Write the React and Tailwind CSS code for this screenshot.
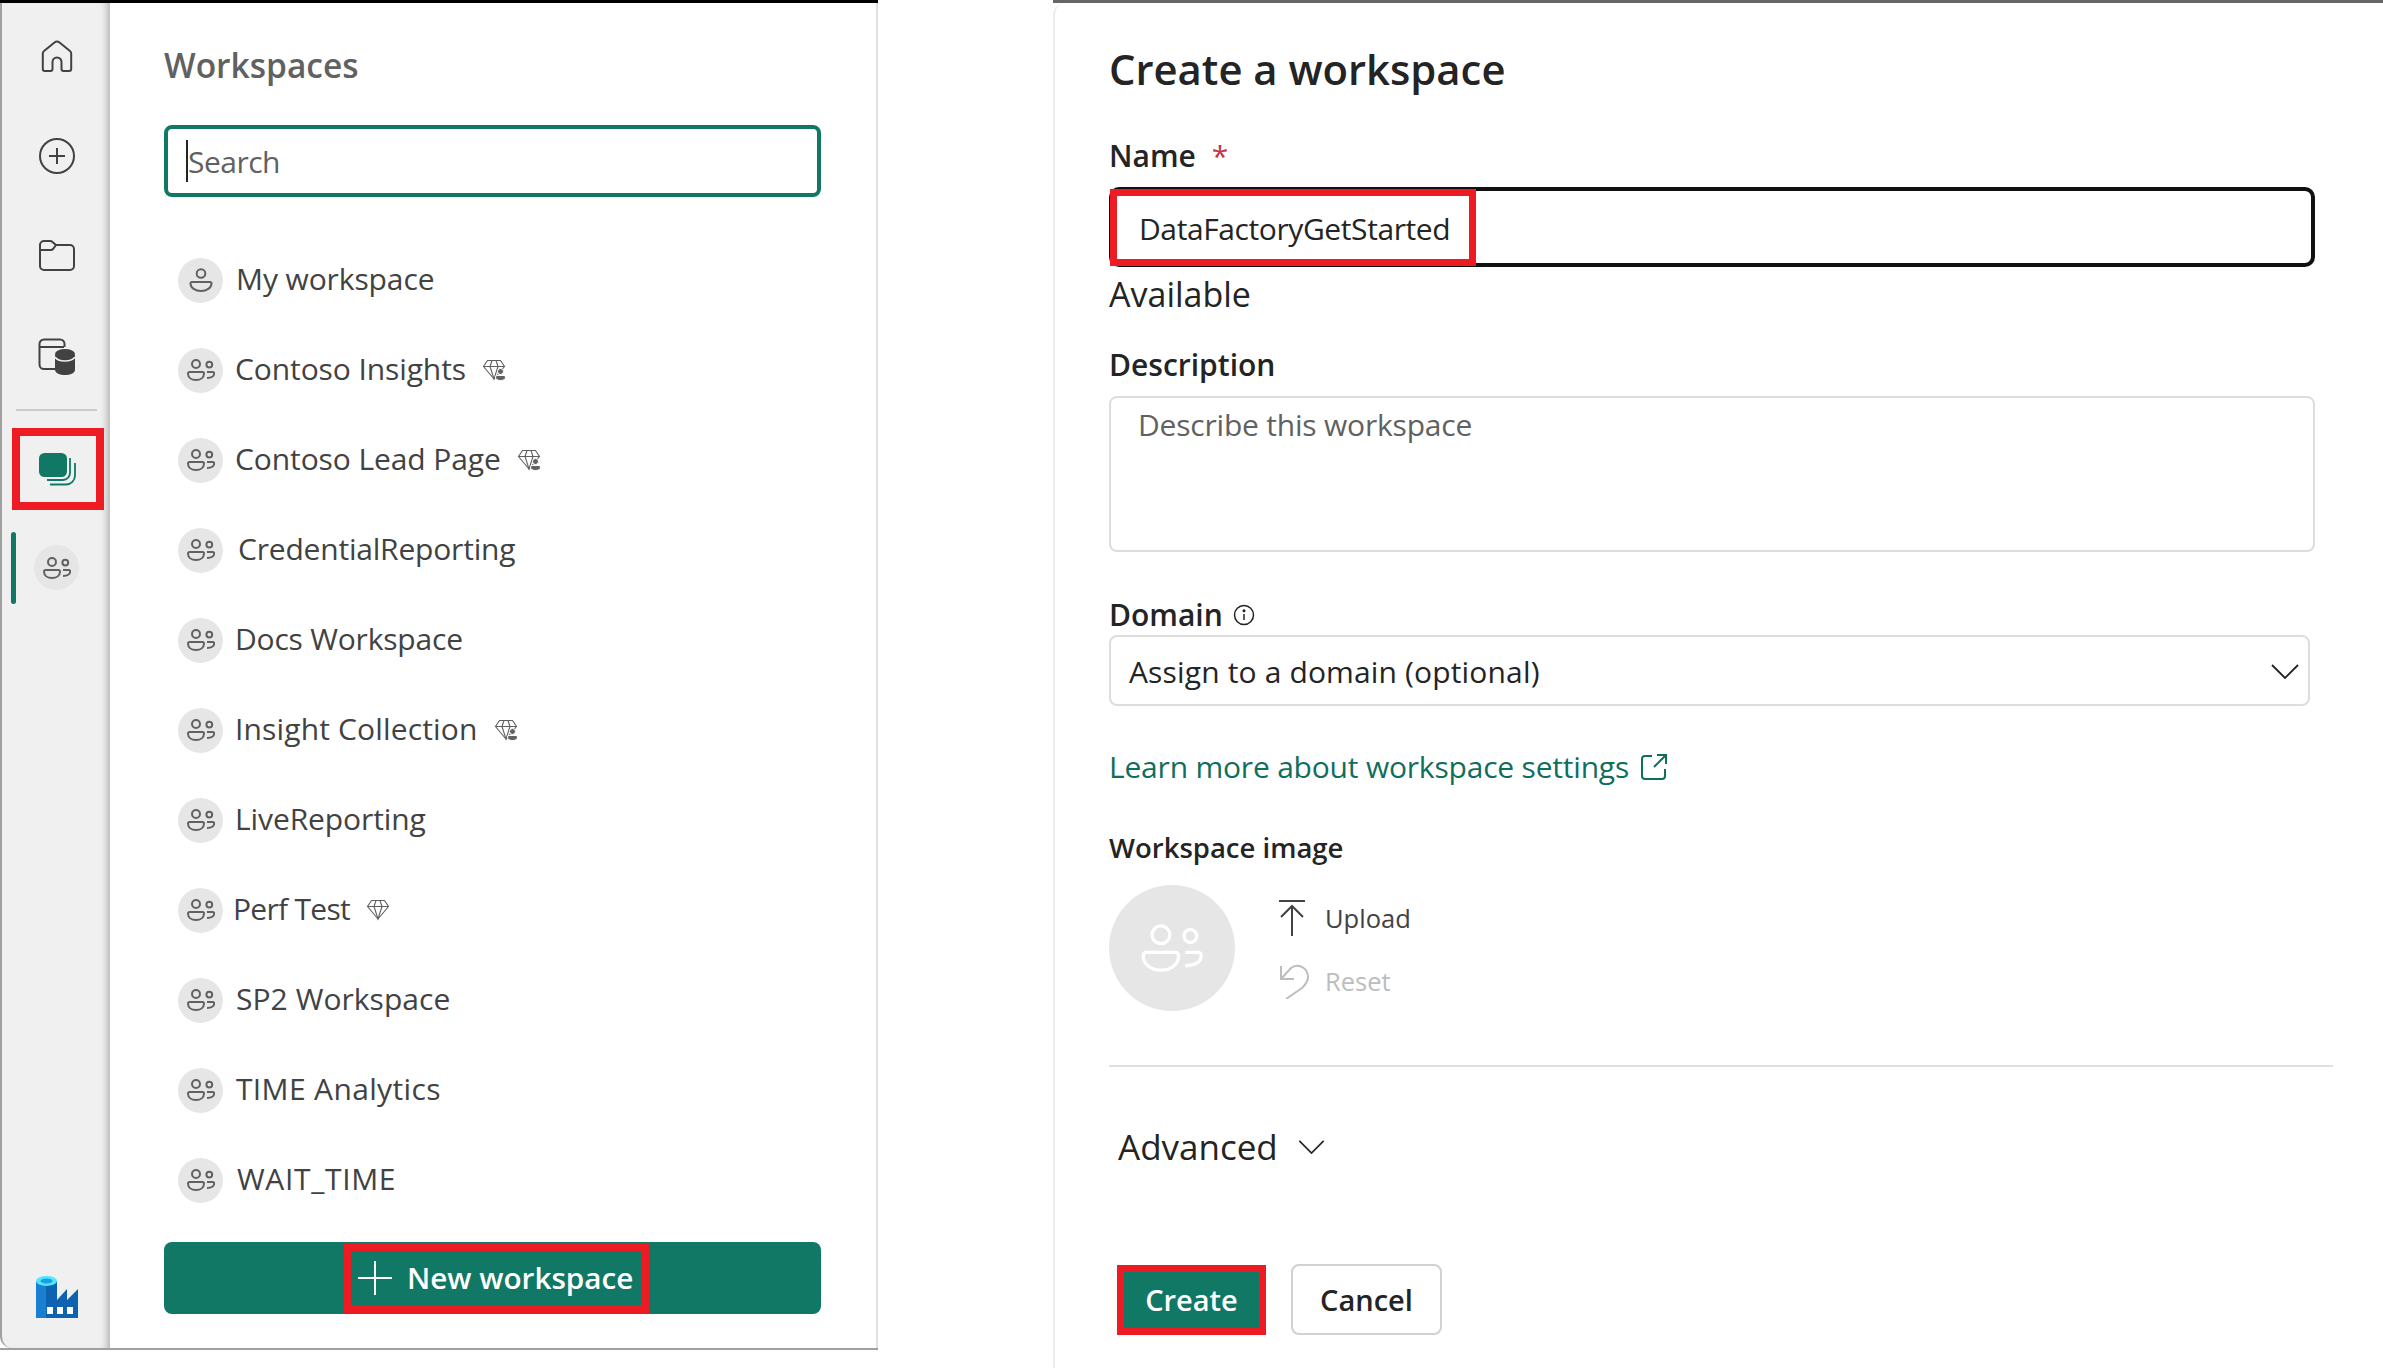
import React from 'react';

const font = { fontFamily: '"Open Sans", "Noto Sans", sans-serif' };

function PeopleIcon({ className = 'w-[28px] h-[22px] text-[#616161]', strokeWidth = 2 }) {
  return (
    <svg viewBox="0 0 28 22" className={className} fill="none" stroke="currentColor" strokeWidth={strokeWidth}>
      <circle cx="9" cy="5" r="4" />
      <circle cx="22.3" cy="5.6" r="2.9" />
      <path d="M2.5 13H15.5a1.5 1.5 0 0 1 1.5 1.5C17 18.5 13.5 21 9 21S1 18.5 1 14.5A1.5 1.5 0 0 1 2.5 13Z" />
      <path d="M20 13H25.8a1.4 1.4 0 0 1 1.4 1.4C27.2 17.2 24.5 19 20 19" />
    </svg>
  );
}

function PersonIcon() {
  return (
    <svg viewBox="0 0 24 24" className="w-[24px] h-[26px] text-[#616161]" fill="none" stroke="currentColor" strokeWidth="2">
      <circle cx="12" cy="5.5" r="4.3" />
      <path d="M3 14H21a1.5 1.5 0 0 1 1.5 1.5C22.5 20 17.5 23 12 23S1.500 20 1.500 15.500A1.500 1.500 0 0 1 3 14Z" />
    </svg>
  );
}

function DiamondIcon({ person }) {
  return (
    <svg viewBox="0 0 24 22" className="w-[24px] h-[22px] text-[#616161]" fill="none" stroke="currentColor" strokeWidth="1.100">
      <path d="M5.500 1.500H18.500L22.500 7.500L12 20L1.500 7.500Z" />
      <path d="M1.500 7.500H22.500M8 7.500L12 20L16 7.500M8 7.500L10 1.500M16 7.500L14 1.500" />
      {person && (
        <g stroke="#fff" strokeWidth="1" fill="currentColor">
          <circle cx="18.500" cy="12.500" r="3" />
          <path d="M13.500 18a1.500 1.500 0 0 1 1.500-1.500H22a1.500 1.500 0 0 1 1.500 1.500c0 2.500-2 3.500-5 3.500s-5-1-5-3.500Z" />
        </g>
      )}
    </svg>
  );
}

function HomeIcon() {
  return (
    <svg viewBox="0 0 32 33" className="w-[32px] h-[33px] text-[#424242]" fill="none" stroke="currentColor" strokeWidth="2">
      <path d="M13.500 2.500a4 4 0 0 1 5 0L29 11a3 3 0 0 1 1.200 2.400V29a2 2 0 0 1-2 2H22.500a2 2 0 0 1-2-2V22a4.500 4.500 0 0 0-9 0v7a2 2 0 0 1-2 2H3.800a2 2 0 0 1-2-2V13.400A3 3 0 0 1 3 11Z" />
    </svg>
  );
}

function PlusCircleIcon() {
  return (
    <svg viewBox="0 0 36 36" className="w-[36px] h-[36px] text-[#424242]" fill="none" stroke="currentColor" strokeWidth="2">
      <circle cx="18" cy="18" r="17" />
      <path d="M18 10V26M10 18H26" />
    </svg>
  );
}

function FolderIcon() {
  return (
    <svg viewBox="0 0 36 31" className="w-[36px] h-[31px] text-[#424242]" fill="none" stroke="currentColor" strokeWidth="2">
      <path d="M1 5a4 4 0 0 1 4-4H11a3.500 3.500 0 0 1 2.500 1L17 5H31a4 4 0 0 1 4 4V26a4 4 0 0 1-4 4H5a4 4 0 0 1-4-4Z" />
      <path d="M1 10H12a3 3 0 0 0 2-1L17 5" />
    </svg>
  );
}

function DataHubIcon() {
  return (
    <svg viewBox="0 0 37 37" className="w-[37px] h-[37px]" fill="none">
      <path d="M17 31H6a4.500 4.500 0 0 1-4.500-4.500V6A4.500 4.500 0 0 1 6 1.500H22A4.500 4.500 0 0 1 26.500 6V9M1.500 9H26" stroke="#424242" strokeWidth="2" />
      <path d="M17 17V32c0 3 5 5 10 5s10-2 10-5V17Z" fill="#424242" />
      <ellipse cx="27" cy="16" rx="10" ry="5" fill="#424242" />
      <path d="M17 19c1.500 2.500 5.500 4 10 4s8.500-1.500 10-4" stroke="#f0f0f0" strokeWidth="1.500" />
    </svg>
  );
}

function WorkspacesIcon() {
  return (
    <svg viewBox="0 0 38 33" className="w-[38px] h-[33px]" fill="none" stroke="#117865" strokeWidth="1.800">
      <rect x="0" y="0" width="28" height="24" rx="5.500" fill="#117865" stroke="none" />
      <path d="M8 27H24a7 7 0 0 0 7-7V5" />
      <path d="M11 31.500H27a9 9 0 0 0 9-9V10" />
    </svg>
  );
}

function FactoryLogo() {
  return (
    <svg viewBox="0 0 42 42" className="w-[42px] h-[42px]">
      <path d="M0 5H21V24L31 13V24L42 13V42H0Z" fill="#0f62b0" />
      <path d="M0 5H10V42H0Z" fill="#1a7fd0" />
      <ellipse cx="10.500" cy="5" rx="10.500" ry="5" fill="#50e6ff" />
      <ellipse cx="10.500" cy="5" rx="6" ry="2.500" fill="#1b9de2" />
      <rect x="11" y="31" width="6" height="7" fill="#fff" />
      <rect x="21" y="31" width="6" height="7" fill="#fff" />
      <rect x="31" y="31" width="6" height="7" fill="#fff" />
    </svg>
  );
}

function ChevronDown({ className }) {
  return (
    <svg viewBox="0 0 28 15" className={className} fill="none" stroke="#242424" strokeWidth="1.800">
      <path d="M1 1L14 14L27 1" />
    </svg>
  );
}

const workspaces = [
  { name: 'My workspace', offset: 'ml-[13px] tracking-[-0.1px]', single: true },
  { name: 'Contoso Insights', offset: 'ml-[12px] tracking-[-0.1px]', badge: 'person' },
  { name: 'Contoso Lead Page', offset: 'ml-[12px] tracking-[-0.1px]', badge: 'person' },
  { name: 'CredentialReporting', offset: 'ml-[15px] tracking-[-0.2px]' },
  { name: 'Docs Workspace', offset: 'ml-[12px] tracking-[-0.2px]' },
  { name: 'Insight Collection', offset: 'ml-[12px] tracking-[0.15px]', badge: 'person' },
  { name: 'LiveReporting', offset: 'ml-[12px] tracking-[-0.1px]' },
  { name: 'Perf Test', offset: 'ml-[10px] tracking-[-0.7px]', badge: 'plain' },
  { name: 'SP2 Workspace', offset: 'ml-[13px] tracking-[0.05px]' },
  { name: 'TIME Analytics', offset: 'ml-[13px] tracking-[0.35px]' },
  { name: 'WAIT_TIME', offset: 'ml-[14px] tracking-[0.65px]' },
];

function WorkspaceRow({ item }) {
  return (
    <div className="flex items-center h-[90px] pl-[14px]">
      <div className="flex items-center justify-center w-[45px] h-[45px] rounded-full bg-[#e6e6e6] shrink-0">
        {item.single ? <PersonIcon /> : <PeopleIcon />}
      </div>
      <span className={`${item.offset} pb-[3px] text-[30px] leading-[40px] text-[#424242]`}>{item.name}</span>
      {item.badge && (
        <span className="ml-[16px] flex">
          <DiamondIcon person={item.badge === 'person'} />
        </span>
      )}
    </div>
  );
}

function Rail() {
  return (
    <div className="relative flex flex-col items-center w-[110px] pl-[1px] shrink-0 bg-[#f0f0f0] border-l-2 border-[#a0a0a0] rounded-bl-[12px] shadow-[inset_-9px_0_8px_-7px_rgba(0,0,0,0.3)]">
      <div className="mt-[37px] flex"><HomeIcon /></div>
      <div className="mt-[65px] flex"><PlusCircleIcon /></div>
      <div className="mt-[66px] flex"><FolderIcon /></div>
      <div className="mt-[67px] flex"><DataHubIcon /></div>
      <div className="mt-[34px] w-[81px] h-[2px] bg-[#cccccc]" />
      <div className="mt-[17px] ml-[2px] flex items-center justify-center w-[92px] h-[82px] border-[8px] border-[#ed1c24]">
        <WorkspacesIcon />
      </div>
      <div className="absolute left-[9px] top-[529px] w-[5px] h-[72px] rounded-full bg-[#117865]" />
      <div className="mt-[35px] flex items-center justify-center w-[45px] h-[45px] rounded-full bg-[#e6e6e6]">
        <PeopleIcon />
      </div>
      <div className="mt-auto mb-[30px] flex"><FactoryLogo /></div>
    </div>
  );
}

function WorkspacesPanel() {
  return (
    <div className="flex flex-col w-[878px] h-[1350px] shrink-0 border-b-2 border-[#a0a0a0]">
      <div className="h-[3px] bg-black shrink-0" />
      <div className="flex flex-1 min-h-0">
        <Rail />
        <div className="flex-1 flex flex-col pl-[54px] pr-[55px] border-r-2 border-[#e0e0e0]">
          <div className="mt-[37px] mb-[1px] text-[33.500px] leading-[50px] font-semibold text-[#616161]">Workspaces</div>
          <div className="relative mt-[34px] flex items-center h-[72px] pl-[20px] border-4 border-[#117865] rounded-[8px] text-[30px] tracking-[-0.5px] text-[#616161]">
            <span>Search</span>
            <span className="absolute left-[18px] top-[11px] w-[2px] h-[42px] bg-[#242424]" />
          </div>
          <div className="mt-[38px] flex flex-col">
            {workspaces.map((item) => (
              <WorkspaceRow key={item.name} item={item} />
            ))}
          </div>
          <div className="mt-[17px] flex items-center justify-center h-[72px] bg-[#117865] rounded-[8px]">
            <div className="flex items-center h-[70px] w-[305px] ml-[8px] pl-[6px] border-y-[8px] border-x-[7px] border-[#ed1c24] text-white">
              <svg viewBox="0 0 36 36" className="w-[36px] h-[36px]" fill="none" stroke="#fff" strokeWidth="2">
                <path d="M18 1V35M1 18H35" />
              </svg>
              <span className="ml-[14px] text-[29.700px] leading-[44px] font-semibold whitespace-nowrap">New workspace</span>
            </div>
          </div>
        </div>
      </div>
    </div>
  );
}

function CreatePanel() {
  return (
    <div className="flex-1 flex flex-col ml-[175px] h-[1368px]">
      <div className="h-[3px] bg-[#666666] shrink-0" />
      <div className="flex-1 flex flex-col pl-[54px] border-l-2 border-[#ececec] rounded-tl-[12px] text-[#242424]">
        <div className="mt-[36px] text-[41.800px] leading-[60px] font-semibold">Create a workspace</div>

        <div className="mt-[37px] flex text-[30px] leading-[40px] font-semibold">
          Name<span className="ml-[16px] text-[#c4314b] font-normal">*</span>
        </div>
        <div className="relative mt-[11px] flex items-center w-[1206px] h-[80px] pl-[26px] pt-[2px] border-4 border-[#111111] rounded-[10px] text-[30px] tracking-[-0.4px]">
          DataFactoryGetStarted
          <div className="absolute -left-[3px] -top-[2px] w-[366px] h-[77px] border-[7px] border-[#ed1c24]" />
        </div>
        <div className="mt-[7px] text-[34px] leading-[40px]">Available</div>

        <div className="mt-[31px] text-[30px] leading-[40px] font-semibold">Description</div>
        <div className="mt-[11px] w-[1206px] h-[156px] pl-[27px] pt-[7px] border-2 border-[#dddddd] rounded-[8px] text-[30px] tracking-[-0.2px] leading-[40px] text-[#616161]">
          Describe this workspace
        </div>

        <div className="mt-[43px] flex items-center text-[30px] leading-[40px] font-semibold">
          Domain
          <svg viewBox="0 0 22 22" className="ml-[10px] w-[22px] h-[22px]" fill="none" stroke="#242424" strokeWidth="1.500">
            <circle cx="11" cy="11" r="9.500" />
            <path d="M11 10V16" />
            <circle cx="11" cy="6.800" r="0.800" />
          </svg>
        </div>
        <div className="flex items-center justify-between w-[1201px] h-[71px] pl-[18px] pt-[1px] pr-[9px] border-2 border-[#dddddd] rounded-[8px] text-[30px] tracking-[0.15px]">
          Assign to a domain (optional)
          <ChevronDown className="w-[28px] h-[15px]" />
        </div>

        <div className="mt-[41px] flex items-center text-[30px] tracking-[-0.2px] leading-[40px] text-[#0f6f5c]">
          Learn more about workspace settings
          <svg viewBox="0 0 26 26" className="ml-[12px] w-[26px] h-[26px]" fill="none" stroke="#0f6f5c" strokeWidth="2">
            <path d="M11 2H4a3 3 0 0 0-3 3V22a3 3 0 0 0 3 3H21a3 3 0 0 0 3-3V15" />
            <path d="M16 1H25V10M25 1L13 13" />
          </svg>
        </div>

        <div className="mt-[43px] text-[27.500px] leading-[36px] font-semibold">Workspace image</div>
        <div className="mt-[19px] flex">
          <div className="flex items-center justify-center w-[126px] h-[126px] rounded-full bg-[#e6e6e6]">
            <PeopleIcon className="w-[62px] h-[50px] text-white" strokeWidth={1.500} />
          </div>
          <div className="ml-[44px] flex flex-col">
            <div className="mt-[14px] flex items-center h-[38px] text-[25.500px] text-[#424242]">
              <svg viewBox="0 0 26 36" className="w-[26px] h-[36px]" fill="none" stroke="#424242" strokeWidth="2">
                <path d="M0 1H26M13 36V6M2 17L13 6L24 17" />
              </svg>
              <span className="ml-[20px]">Upload</span>
            </div>
            <div className="mt-[25px] flex items-center h-[38px] text-[25.500px] text-[#bdbdbd]">
              <svg viewBox="0 0 30 36" className="w-[30px] h-[36px]" fill="none" stroke="#bdbdbd" strokeWidth="2">
                <path d="M2 3V16H15M2 16L12 5C18 0 29 4 29 14C29 19 26 22 23 25L7 36" />
              </svg>
              <span className="ml-[16px]">Reset</span>
            </div>
          </div>
        </div>

        <div className="mt-[54px] w-[1224px] h-[2px] bg-[#e0e0e0]" />

        <div className="mt-[55px] ml-[9px] flex items-center text-[35px] leading-[50px] font-medium">
          Advanced
          <ChevronDown className="ml-[20px] w-[27px] h-[14px]" />
        </div>

        <div className="mt-[92px] ml-[8px] flex items-center gap-[25px]">
          <div className="flex items-center justify-center w-[149px] h-[70px] bg-[#117865] border-[7px] border-[#ed1c24] text-white text-[29px] font-semibold">
            Create
          </div>
          <div className="flex items-center justify-center w-[151px] h-[71px] bg-white border-2 border-[#d1d1d1] rounded-[8px] text-[29px] font-semibold">
            Cancel
          </div>
        </div>
      </div>
    </div>
  );
}

export default function App() {
  return (
    <div className="flex items-start w-[2383px] h-[1368px] bg-white overflow-hidden" style={font}>
      <WorkspacesPanel />
      <CreatePanel />
    </div>
  );
}
